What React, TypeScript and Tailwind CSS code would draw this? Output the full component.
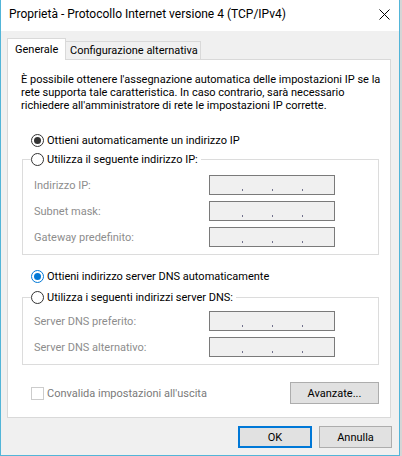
import React from 'react';

const FONT = "font-['Roboto',sans-serif] text-[11px] leading-[13px]";

function Radio({ checked, accent }: { checked?: boolean; accent?: boolean }) {
  return (
    <span
      className={`flex h-[13px] w-[13px] shrink-0 items-center justify-center rounded-full border bg-white ${
        accent ? 'border-[#0078d7]' : 'border-[#333333]'
      }`}
    >
      {checked && <span className={`h-[7px] w-[7px] rounded-full ${accent ? 'bg-[#0078d7]' : 'bg-[#333333]'}`} />}
    </span>
  );
}

function IpField({ label }: { label: string }) {
  return (
    <div className="flex items-center justify-between">
      <span className="text-[#8d8d8d]">{label}</span>
      <div className="flex h-[20px] w-[126px] items-end border border-[#7a7a7a] bg-[#f0f0f0] pb-[3px] pl-[32px]">
        <span className="h-[2px] w-px bg-[#70708c]" />
        <span className="ml-[29px] h-[2px] w-px bg-[#70708c]" />
        <span className="ml-[29px] h-[2px] w-px bg-[#70708c]" />
      </div>
    </div>
  );
}

function Group({ title, fields, tight }: { title: string; fields: string[]; tight?: boolean }) {
  return (
    <fieldset className="ml-[14px] mr-[11px] border border-[#dcdcdc]">
      <legend className="ml-[8px] pr-[3px]">
        <span className="flex items-center gap-[3px] text-black">
          <Radio />
          {title}
        </span>
      </legend>
      <div className={`flex flex-col gap-[6px] pb-[7px] pl-[11px] pr-[43px] ${tight ? 'pt-[7px]' : 'pt-[9px]'}`}>
        {fields.map((f) => (
          <IpField key={f} label={f} />
        ))}
      </div>
    </fieldset>
  );
}

export default function App() {
  return (
    <div className={`h-[456px] w-[402px] bg-[#d6d6d6] whitespace-nowrap ${FONT}`}>
      <div className="flex h-[456px] w-[400px] flex-col border-x border-b border-[#52b5d8] bg-[#f0f0f0] text-black">
        {/* title bar */}
        <div className="flex h-[31px] items-center justify-between bg-white pl-[8px] pr-[9px]">
          <span className="pb-[2px] text-[12px]">Proprietà - Protocollo Internet versione 4 (TCP/IPv4)</span>
          <svg width="11" height="11" viewBox="0 0 11 11" className="mb-[2px]">
            <path d="M0.5 0.5 L10.5 10.5 M10.5 0.5 L0.5 10.5" stroke="#000" strokeWidth="1" />
          </svg>
        </div>

        <div className="flex flex-1 flex-col pl-[6px] pr-[7px] pt-[7px]">
          {/* tabs */}
          <div className="flex items-end">
            <div className="relative z-10 -mb-px flex h-[22px] w-[59px] items-center border-x border-t border-[#d9d9d9] bg-white pl-[7px]">
              Generale
            </div>
            <div className="flex h-[18px] w-[135px] items-center border-r border-t border-[#d9d9d9] pl-[4px]">
              Configurazione alternativa
            </div>
          </div>

          {/* panel */}
          <div className="flex h-[359px] w-[384px] flex-col border border-[#d9d9d9] bg-white pt-[13px]">
            <p className="pl-[13px]">
              È possibile ottenere l'assegnazione automatica delle impostazioni IP se la
              <br />
              rete supporta tale caratteristica. In caso contrario, sarà necessario
              <br />
              richiedere all'amministratore di rete le impostazioni IP corrette.
            </p>

            <div className="mt-[22px] flex items-center gap-[3px] pl-[23px]">
              <Radio checked />
              Ottieni automaticamente un indirizzo IP
            </div>
            <div className="mt-[6px]">
              <Group title="Utilizza il seguente indirizzo IP:" fields={['Indirizzo IP:', 'Subnet mask:', 'Gateway predefinito:']} />
            </div>

            <div className="mt-[15px] flex items-center gap-[3px] pl-[23px]">
              <Radio checked accent />
              Ottieni indirizzo server DNS automaticamente
            </div>
            <div className="mt-[8px]">
              <Group tight title="Utilizza i seguenti indirizzi server DNS:" fields={['Server DNS preferito:', 'Server DNS alternativo:']} />
            </div>

            <div className="mt-[17px] flex items-center justify-between pl-[23px] pr-[11px]">
              <div className="flex items-center gap-[3px] text-[#7a7a7a]">
                <span className="h-[13px] w-[13px] border border-[#cccccc] bg-white" />
                Convalida impostazioni all'uscita
              </div>
              <button className="flex h-[22px] w-[89px] items-center justify-center border border-[#adadad] bg-[#e1e1e1]">
                Avanzate...
              </button>
            </div>
          </div>

          {/* footer buttons */}
          <div className="mt-[8px] flex justify-end gap-[7px]">
            <button className="flex h-[22px] w-[74px] items-center justify-center border-2 border-[#0078d7] bg-[#e1e1e1]">
              OK
            </button>
            <button className="flex h-[22px] w-[73px] items-center justify-center border border-[#adadad] bg-[#e1e1e1]">
              Annulla
            </button>
          </div>
        </div>
      </div>
    </div>
  );
}
